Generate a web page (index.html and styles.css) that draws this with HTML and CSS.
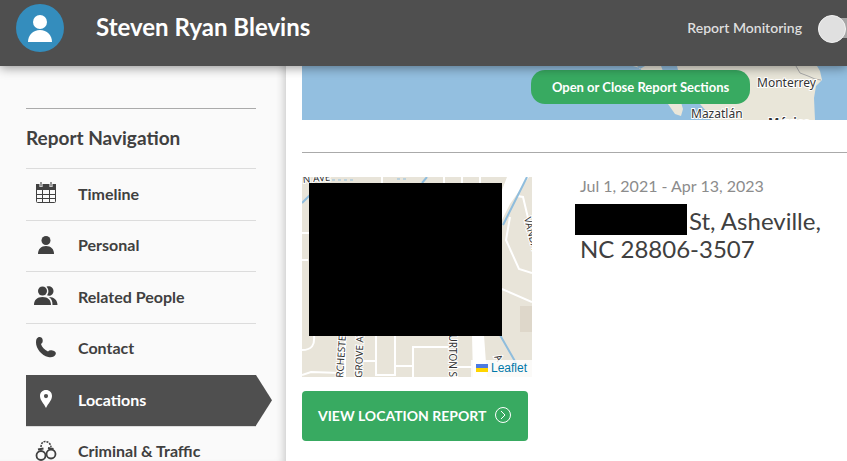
FILE: index.html
```html
<!DOCTYPE html>
<html lang="en">
<head>
<meta charset="utf-8">
<title>Steven Ryan Blevins</title>
<link rel="stylesheet" href="styles.css">
</head>
<body>
<header class="topbar">
  <span class="avatar">
    <svg viewBox="0 0 48 48" width="48" height="48" aria-hidden="true"><circle cx="24" cy="18" r="7"/><path d="M12 38c0-7 5-12 12-12s12 5 12 12z"/></svg>
  </span>
  <h1 class="name">Steven Ryan Blevins</h1>
  <label class="monitor-label" for="monitoring">Report Monitoring</label>
  <input class="switch" type="checkbox" id="monitoring">
</header>
<div class="page">
  <nav class="sidebar">
    <h2 class="nav-title">Report Navigation</h2>
    <ul class="nav-list">
      <li><a class="nav-item" href="#timeline">
        <svg class="icon" viewBox="0 0 24 24" aria-hidden="true"><rect x="2.500" y="4.500" width="19" height="17" rx="1" fill="none" stroke="currentColor"/><path d="M2 3h20v6H2zM2 13h20v1H2zM2 17h20v1H2zM8 9h1v12H8zM15 9h1v12h-1z"/><path d="M7 2v4M17 2v4" stroke="#fafafa" stroke-width="3"/><path d="M7 1v4.500M17 1v4.500" stroke="#777" stroke-width="1.500"/></svg>
        Timeline</a></li>
      <li><a class="nav-item" href="#personal">
        <svg class="icon" viewBox="0 0 24 24" aria-hidden="true"><circle cx="12" cy="7.500" r="4.500"/><path d="M4 21c0-5 3-8 8-8s8 3 8 8z"/></svg>
        Personal</a></li>
      <li><a class="nav-item" href="#people">
        <svg class="icon" viewBox="0 0 24 24" aria-hidden="true"><circle cx="8.500" cy="7" r="4.500"/><path d="M0 21c0-5 3-8 8.500-8s8.500 3 8.500 8zM12.500 2.800c3-1.500 7 .5 7 4.200s-3.500 5.700-6.500 4.300c2-2.300 2-6-.5-8.500zM15 13c5 0 8.500 3 8.500 8h-5c0-4-1-6-3.500-8z"/></svg>
        Related People</a></li>
      <li><a class="nav-item" href="#contact">
        <svg class="icon" viewBox="0 0 24 24" aria-hidden="true"><path d="M4 1.500c2-1 4.500 0 4.700 2.500.2 2-.3 3-1.700 4 .8 3 3.500 6 7 7.500 1-1.200 2.500-1.500 4.500-1 2.500.5 4 2 3.200 3.800-1 2.500-4 3.500-7.500 2.700C7.500 19.500 2 12.500 2 6.500 2 4 2.500 2.200 4 1.500z"/></svg>
        Contact</a></li>
      <li><a class="nav-item active" href="#locations" aria-current="page">
        <svg class="icon" viewBox="0 0 24 24" aria-hidden="true"><path fill-rule="evenodd" d="M12 3c-3.500 0-6 2.500-6 6 0 4.500 4 7.500 6 12 2-4.500 6-7.500 6-12 0-3.500-2.500-6-6-6zm0 4a2 2 0 1 1 0 4.200A2 2 0 0 1 12 7z"/></svg>
        Locations</a></li>
      <li><a class="nav-item" href="#criminal">
        <svg class="icon" viewBox="0 0 24 24" aria-hidden="true"><g fill="none" stroke="currentColor"><circle cx="7" cy="16.500" r="4.500" stroke-width="1.800"/><circle cx="17" cy="15" r="4.500" stroke-width="1.800"/><path d="M4 10.500l5.500-1M14 9l5.500 1" stroke-width="2.200"/><path d="M7 8c0-3 1.500-5.500 4-5.500S16.500 4 17 8" stroke-width="1.500" stroke-dasharray="2 1"/></g></svg>
        Criminal &amp; Traffic</a></li>
    </ul>
  </nav>
  <main class="content">
    <div class="overview">
      <svg class="overview-map" viewBox="0 0 545 54" preserveAspectRatio="xMaxYMin slice" role="img" aria-label="Map of Mexico">
        <rect width="545" height="54" fill="#93bfe0"/>
        <path d="M331 0h4l3 3 5-3h16l2 5 14 18 6 20-2 7-6-2-7-10-14-15-14-21zM375 0h140l3 5 2 9-6 6-2 12 1 22H409l-4-8-7-8-13-18-8-12z" fill="#e9e6d9"/>
        <path d="M494 0l4 7 8 3 7 3 6 1" fill="none" stroke="#aaa"/>
        <g class="map-label"><text x="455" y="21">Monterrey</text><text x="389" y="52">Mazatlán</text><text class="country" x="466" y="61">México</text></g>
      </svg>
      <button class="sections-button" type="button">Open or Close Report Sections</button>
    </div>
    <section class="location">
      <div class="location-side">
        <div class="street">
          <svg class="street-map" viewBox="0 0 230 200" preserveAspectRatio="xMidYMid slice" role="img" aria-label="Street map">
            <rect width="230" height="200" fill="#e8e4d9"/>
            <path d="M205 0h22l-19 27-8 16v-30zM170 158h12l3 42h-14z" fill="#fff"/>
            <rect x="218" y="129" width="12" height="26" fill="#ded7ca"/>
            <g fill="none" stroke="#fff" stroke-width="2">
              <path d="M215 19l6 1 5 21M208 40l-4 23 13 29 13 4M200 112l30 13M0 56h8M0 83h6M12 158c1 10-2 15-12 15M0 198l9-3 30 1M74 158v40h19v-40M93 189h18M111 200v-30h37M60 184h14M150 190h20M80 0v8M142 0v8M160 0v8M178 0v8M43 158v42"/>
            </g>
            <path d="M225 0l-24 48M198 158l16 28M0 26l8-8M120 6l5-6" fill="none" stroke="#8fbddd" stroke-width="2"/>
            <path d="M30 3h24M95 2h10" fill="none" stroke="#8fbddd" stroke-dasharray="3 3"/>
            <g class="street-label">
              <text transform="translate(1 6) rotate(-5)">N AVE</text>
              <text transform="translate(41 201) rotate(-86)">RCHESTER</text>
              <text transform="translate(60 201) rotate(-88)">GROVE AVE</text>
              <text transform="translate(147 151) rotate(90)">BURTON ST</text>
              <text transform="translate(222 41) rotate(76)">VANDA</text>
              <text transform="translate(192 180) rotate(60)">A</text>
            </g>
          </svg>
          <span class="map-redaction"></span>
          <a class="attribution" href="#leaflet"><svg width="12" height="8" viewBox="0 0 12 8" aria-hidden="true"><path fill="#4c7be1" d="M0 0h12v4H0z"/><path fill="#ffd500" d="M0 4h12v4H0z"/></svg> Leaflet</a>
        </div>
        <a class="report-button" href="#report">VIEW LOCATION REPORT
          <svg width="18" height="18" viewBox="0 0 18 18" aria-hidden="true"><circle cx="9" cy="9" r="7.500"/><path d="M7 5l4 4-4 4"/></svg>
        </a>
      </div>
      <div class="details">
        <p class="dates">Jul 1, 2021 - Apr 13, 2023</p>
        <p class="address"><span class="address-redaction"></span>St, Asheville,<br>NC 28806-3507</p>
      </div>
    </section>
  </main>
</div>
</body>
</html>
```
FILE: styles.css
```css
* { box-sizing: border-box; }
body {
  margin: 0;
  height: 100vh;
  display: flex;
  flex-direction: column;
  overflow: hidden;
  background: #fff;
  color: #404040;
  font-family: Lato, "Liberation Sans", sans-serif;
}
h1, h2, p, ul { margin: 0; padding: 0; }
ul { list-style: none; }
a { color: inherit; text-decoration: none; }

.topbar {
  position: relative;
  z-index: 2;
  flex: none;
  display: flex;
  align-items: center;
  height: 66px;
  padding: 0 0 10px 16px;
  background: #4f4f4f;
  box-shadow: 0 2px 10px rgba(0, 0, 0, 0.4);
  color: #fff;
}
.avatar { display: flex; border-radius: 50%; background: #348dbd; }
.avatar svg { fill: #fff; }
.name { margin: 0 auto 0 32px; padding-bottom: 2px; font-size: 24px; line-height: 32px; }
.monitor-label { margin-right: 16px; padding-bottom: 2px; color: #dedede; font-size: 14px; font-weight: 600; }
.switch {
  appearance: none;
  position: relative;
  width: 44px;
  height: 20px;
  margin: 0 -15px 0 0;
  border-radius: 10px;
  background: #a6a6a6;
}
.switch::before {
  content: "";
  position: absolute;
  top: -3px;
  left: 0;
  width: 26px;
  height: 26px;
  border: 1px solid #f2f2f2;
  border-radius: 50%;
  background: #e0e0e0;
}

.page { flex: 1; display: flex; min-height: 0; }
.sidebar {
  flex: none;
  width: 286px;
  padding: 42px 30px 0 26px;
  background: #fafafa;
  box-shadow: inset -8px 0 8px -6px rgba(0, 0, 0, 0.2);
}
.nav-title {
  height: 60px;
  border-top: 1px solid #aaa;
  font-size: 19px;
  line-height: 58px;
}
.nav-list { display: grid; grid-auto-rows: 1fr; height: 309px; }
.nav-item {
  position: relative;
  display: flex;
  align-items: center;
  gap: 20px;
  height: 100%;
  padding: 0 0 2px 8px;
  border-top: 1px solid #dcdcdc;
  font-size: 16px;
  font-weight: 700;
}
.icon { width: 24px; height: 24px; fill: currentColor; }
.nav-item.active {
  border-color: transparent;
  background: #4f4f4f;
  background-clip: padding-box;
  color: #fff;
}
.active::after {
  content: "";
  position: absolute;
  top: 0;
  bottom: 0;
  left: 100%;
  width: 16px;
  background: #4f4f4f;
  clip-path: polygon(0 0, 100% 50%, 0 100%);
}

.content { flex: 1; min-width: 0; padding-left: 16px; }
.overview { position: relative; }
.overview-map { display: block; width: 100%; height: 54px; }
.map-label {
  fill: #333;
  stroke: #fff;
  stroke-width: 2px;
  paint-order: stroke;
  font: 12px "Noto Sans", sans-serif;
}
.country { font-weight: 700; }
.sections-button {
  position: absolute;
  top: 4px;
  left: 42%;
  height: 34px;
  padding: 0 21px;
  border: 0;
  border-radius: 14px;
  background: #38aa61;
  color: #fff;
  font: 700 13px Lato, sans-serif;
}
.location {
  display: flex;
  gap: 48px;
  margin-top: 32px;
  padding-top: 24px;
  border-top: 1px solid #aaa;
}
.location-side { flex: none; width: 230px; }
.street { position: relative; height: 200px; }
.street-map { display: block; width: 100%; height: 100%; }
.street-label {
  fill: #333;
  stroke: #fff;
  stroke-width: 2px;
  paint-order: stroke;
  font: 10px "Noto Sans", sans-serif;
}
.map-redaction {
  position: absolute;
  top: 6px;
  left: 7px;
  width: 193px;
  height: 153px;
  background: #000;
}
.attribution {
  position: absolute;
  right: 0;
  bottom: 0;
  padding: 0 5px;
  background: rgba(255, 255, 255, 0.8);
  color: #0078a8;
  font: 12px/17px "Liberation Sans", sans-serif;
}
.report-button {
  display: inline-flex;
  align-items: center;
  gap: 8px;
  height: 50px;
  margin-top: 14px;
  padding: 0 16px 2px;
  border-radius: 4px;
  background: #38aa61;
  color: #fff;
  font-size: 14px;
  font-weight: 700;
  white-space: nowrap;
}
.report-button svg { fill: none; stroke: currentColor; }
.dates { color: #8c8c8c; font-size: 16px; line-height: 18px; }
.address { margin-top: 12px; font-size: 24px; line-height: 28px; }
.address-redaction {
  display: inline-block;
  width: 112px;
  height: 31px;
  margin: -10px 2px 0 -5px;
  background: #000;
  vertical-align: bottom;
}
```
